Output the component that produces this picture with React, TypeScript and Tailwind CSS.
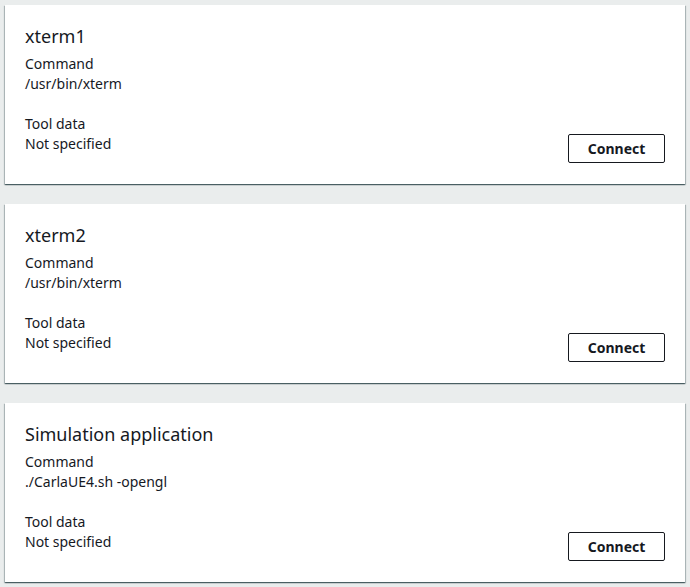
import React from 'react';

interface Tool {
    name: string;
    command: string;
    toolData: string;
}

const tools: Tool[] = [
    { name: 'xterm1', command: '/usr/bin/xterm', toolData: 'Not specified' },
    { name: 'xterm2', command: '/usr/bin/xterm', toolData: 'Not specified' },
    { name: 'Simulation application', command: './CarlaUE4.sh -opengl', toolData: 'Not specified' },
];

const ToolCard: React.FC<{ tool: Tool }> = ({ tool }) => (
    <div className="bg-white h-[179px] px-5 pt-[20px] pb-[21px] flex flex-col shadow-[0_1px_1px_0_rgba(0,28,36,0.5),1px_1px_1px_0_rgba(0,28,36,0.2),-1px_1px_1px_0_rgba(0,28,36,0.2)]">
        <h2 className="text-[18px] leading-[22px] font-normal text-[#16191f]">{tool.name}</h2>
        <div className="flex flex-1 items-end justify-between mt-[7px]">
            <div className="self-start text-[14px] leading-5 text-[#16191f]">
                <div>Command</div>
                <div>{tool.command}</div>
                <div className="mt-5">Tool data</div>
                <div>{tool.toolData}</div>
            </div>
            <button className="w-[97px] h-[29px] border border-[#16191f] rounded-[2px] bg-white text-[14px] font-bold text-[#16191f]">
                Connect
            </button>
        </div>
    </div>
);

export default function App() {
    return (
        <div
            className="min-h-[587px] bg-[#eaeded] px-[5px] pt-[5px] flex flex-col gap-[20px]"
            style={{ fontFamily: '"Noto Sans", "Open Sans", sans-serif' }}
        >
            {tools.map((tool) => (
                <ToolCard key={tool.name} tool={tool} />
            ))}
        </div>
    );
}
